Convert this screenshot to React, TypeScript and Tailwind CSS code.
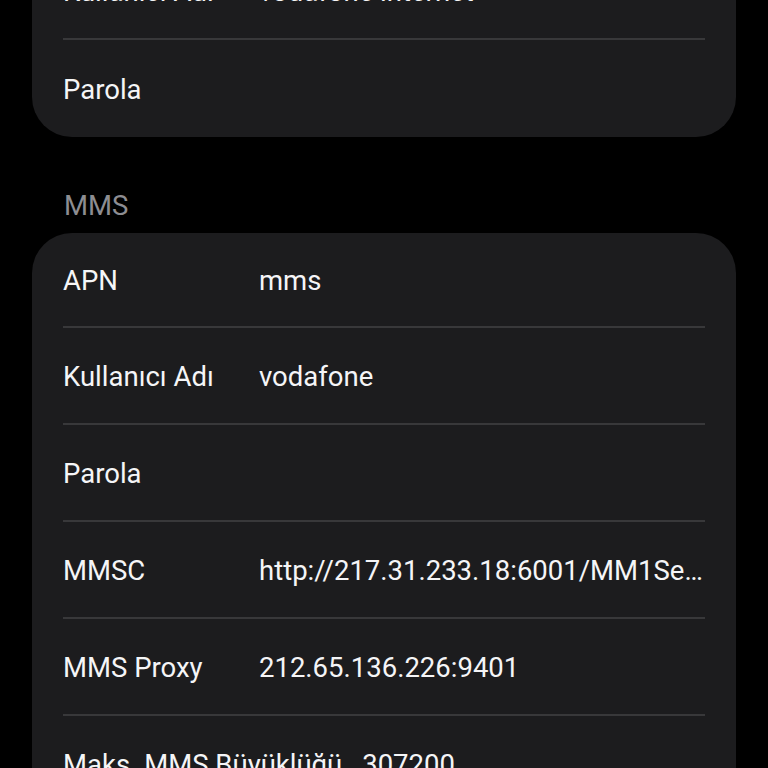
import React from "react";

type Row = { label: string; value?: string };

const topRows: Row[] = [
  { label: "Kullanıcı Adı", value: "vodafone internet" },
  { label: "Parola" },
];

const mmsRows: Row[] = [
  { label: "APN", value: "mms" },
  { label: "Kullanıcı Adı", value: "vodafone" },
  { label: "Parola" },
  { label: "MMSC", value: "http://217.31.233.18:6001/MM1Se…" },
  { label: "MMS Proxy", value: "212.65.136.226:9401" },
  { label: "Maks. MMS Büyüklüğü", value: "307200" },
  { label: "MMS UA Prof URL" },
];

function Card({ rows, firstShort }: { rows: Row[]; firstShort?: boolean }) {
  return (
    <div className="bg-[#1c1c1e] rounded-[40px] px-[31px]">
      {rows.map((r, i) => {
        const last = i === rows.length - 1;
        const short = firstShort && i === 0;
        return (
          <div
            key={i}
            className={
              (short ? "h-[95px] " : "h-[97px] ") +
              "flex items-center gap-[20px] pt-[2px]" +
              (last ? "" : " border-b-[2px] border-[#38383a]")
            }
          >
            <span className="min-w-[176px] whitespace-nowrap text-[#f5f5f7]">{r.label}</span>
            {r.value && (
              <span className="flex-1 min-w-0 whitespace-nowrap overflow-hidden text-[#f5f5f7]">
                {r.value}
              </span>
            )}
          </div>
        );
      })}
    </div>
  );
}

export default function App() {
  return (
    <div
      className="w-[768px] h-[768px] overflow-hidden bg-black text-[27.5px] leading-[32px]"
      style={{ fontFamily: "Roboto, 'Noto Sans', sans-serif" }}
    >
      <div className="px-[32px] mt-[-57px]">
        <Card rows={topRows} />
        <div className="pt-[53px] pb-[11px] px-[32px] text-[#8d8d92]">MMS</div>
        <Card rows={mmsRows} firstShort />
      </div>
    </div>
  );
}
